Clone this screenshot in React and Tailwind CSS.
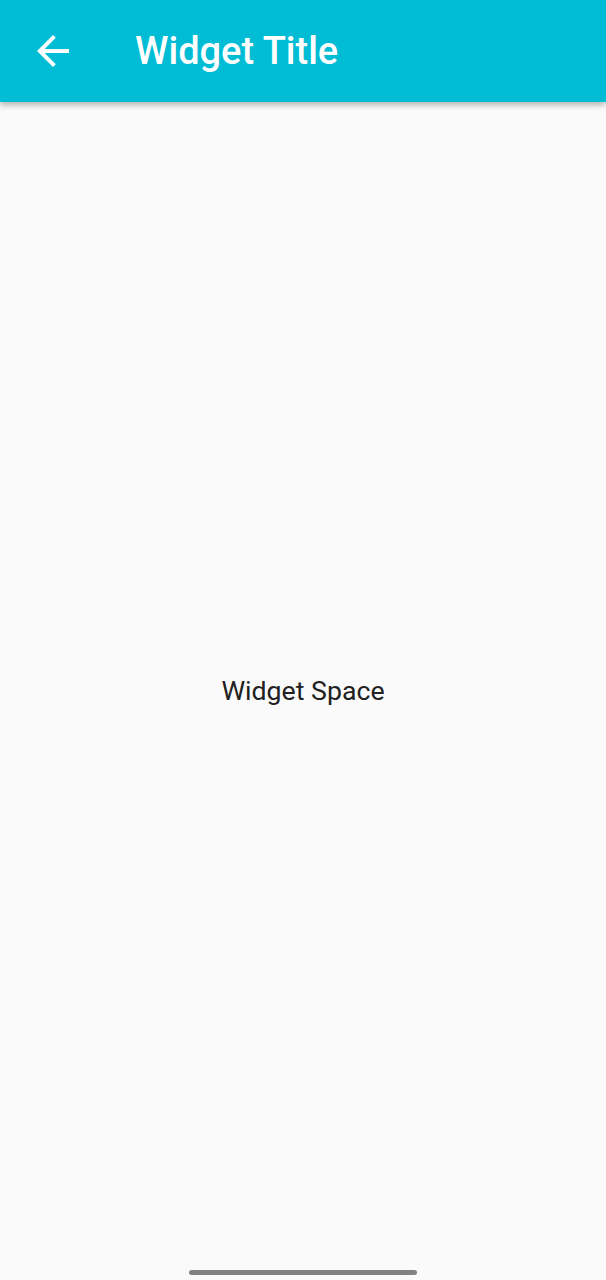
export default function App() {
  return (
    <div className="relative flex h-[1280px] w-full flex-col bg-[#fafafa] font-['Roboto',sans-serif]">
      <header className="relative z-10 flex h-[102px] shrink-0 items-center bg-[#00bcd4] shadow-[0_3px_6px_rgba(0,0,0,0.28)]">
        <button className="ml-[29px] flex h-[48px] w-[48px] items-center justify-center text-white" aria-label="Back">
          <svg width="48" height="48" viewBox="0 0 24 24" fill="currentColor">
            <path d="M20 11H7.83l5.59-5.59L12 4l-8 8 8 8 1.41-1.41L7.83 13H20v-2z" />
          </svg>
        </button>
        <h1 className="ml-[58px] text-[38px] font-medium leading-none text-white">Widget Title</h1>
      </header>
      <main className="flex flex-1 items-center justify-center">
        <p className="text-[26.7px] text-[#212121]">Widget Space</p>
      </main>
      <div className="absolute bottom-[5px] left-1/2 h-[5px] w-[228px] -translate-x-1/2 rounded-full bg-[#828282]" />
    </div>
  );
}
